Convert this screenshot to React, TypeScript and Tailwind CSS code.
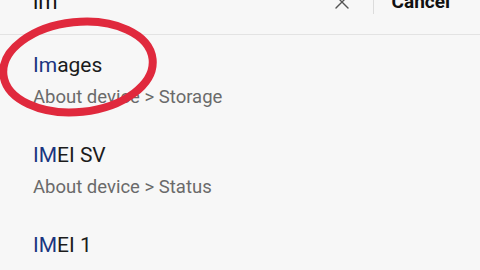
import React from 'react';
import { X } from 'lucide-react';

const results = [
  { hit: 'Im', rest: 'ages', path: 'About device > Storage' },
  { hit: 'IM', rest: 'EI SV', path: 'About device > Status' },
  { hit: 'IM', rest: 'EI 1', path: '' },
];

export default function App() {
  return (
    <div className="relative w-[480px] h-[270px] overflow-hidden bg-[#f7f7f7] font-['Roboto',sans-serif]">
      {/* search bar, scrolled mostly off screen */}
      <div className="-mt-[30px] h-[65px] flex items-center border-b border-[#e3e3e3]">
        <span className="pl-[33px] flex-1 text-[22px] leading-none text-[#111]">im</span>
        <X className="w-[24px] h-[24px] text-[#555] mr-[19px]" strokeWidth={1.4} />
        <div className="w-px self-stretch my-[20px] bg-[#dcdcdc]" />
        <span className="pl-[18px] pr-[30px] text-[19px] font-bold text-[#111]">Cancel</span>
      </div>

      {results.map((r, i) => (
        <div key={i} className="h-[90px] flex items-start pt-[18px] pl-[33px]">
          <div className="flex flex-col gap-[9px]">
            <div className="text-[21px] leading-[24px] text-[#1c1c1c]">
              <span className="text-[#1a3580]">{r.hit}</span>
              {r.rest}
            </div>
            {r.path && <div className="text-[18.5px] leading-[22px] text-[#6a6a6a]">{r.path}</div>}
          </div>
        </div>
      ))}

      {/* red hand-drawn circle annotation */}
      <svg className="absolute left-0 top-0 pointer-events-none" width="480" height="270">
        <ellipse
          cx="78"
          cy="67"
          rx="75"
          ry="45"
          transform="rotate(-6 78 67)"
          fill="none"
          stroke="#e0293d"
          strokeWidth="8"
        />
      </svg>
    </div>
  );
}
